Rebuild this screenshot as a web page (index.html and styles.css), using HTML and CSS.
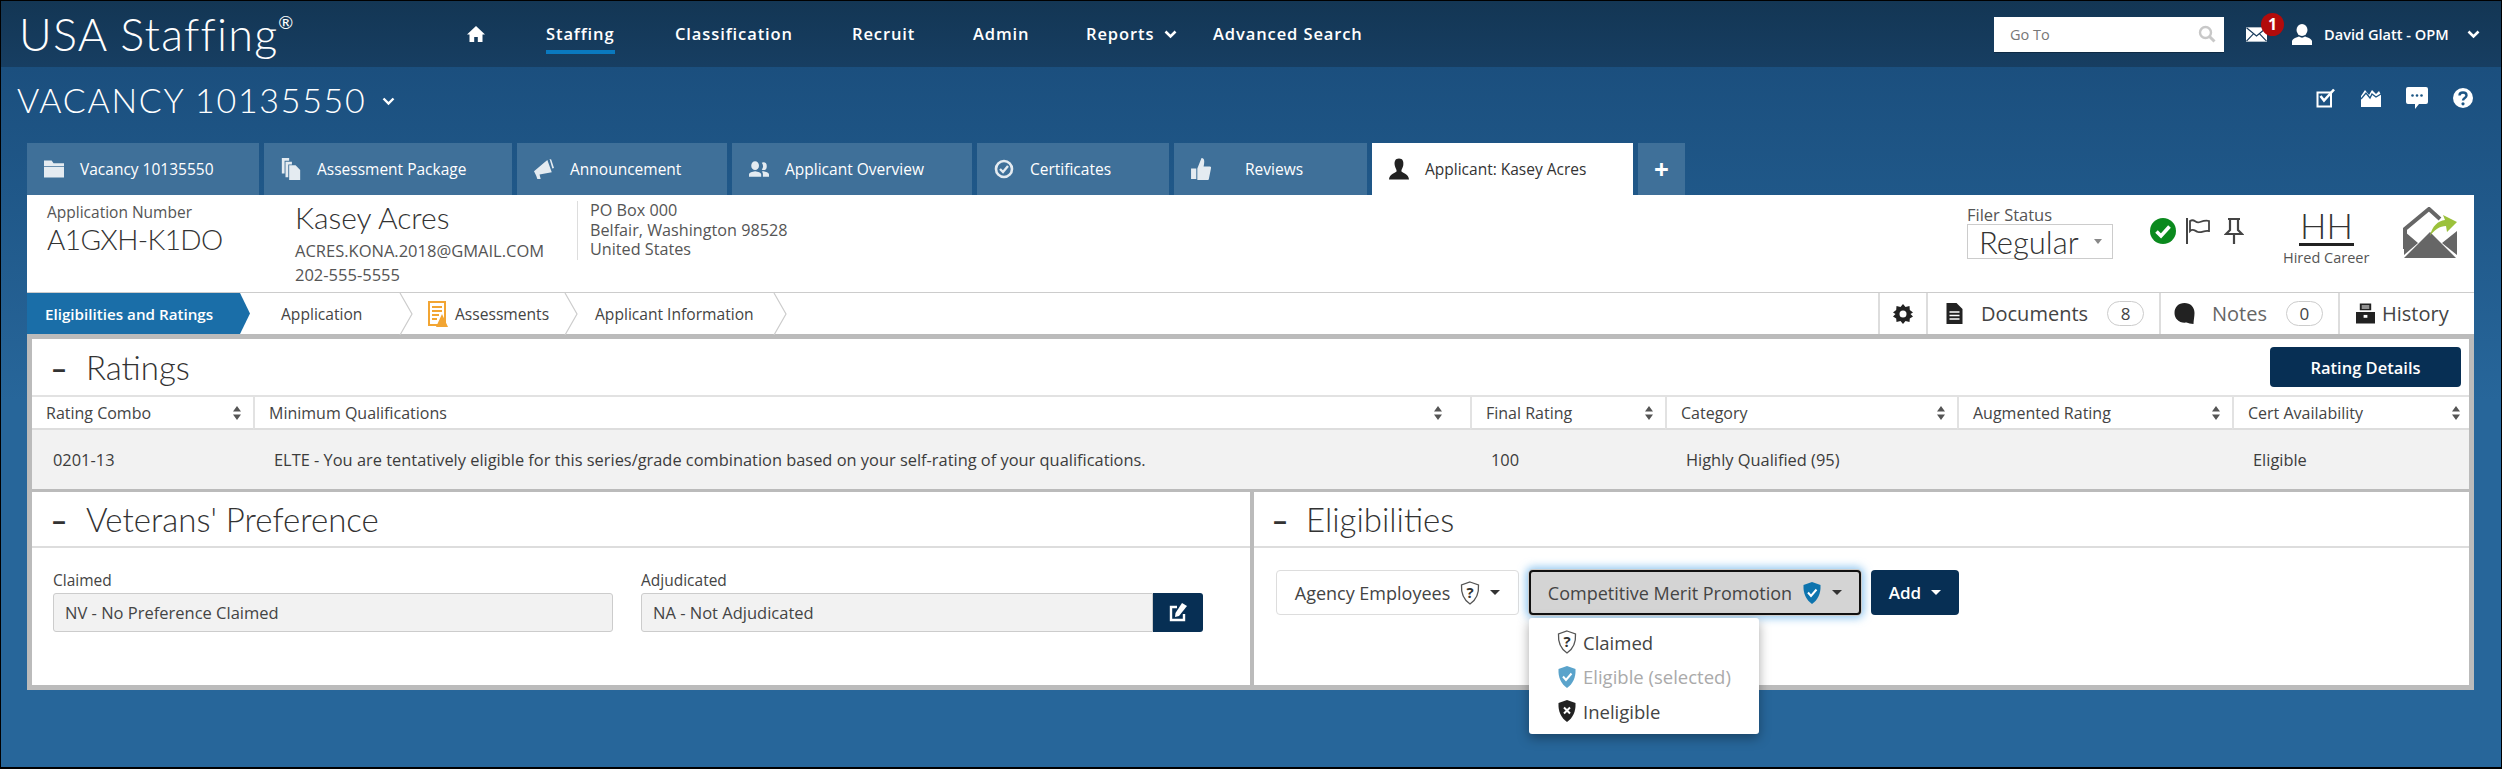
FILE: index.html
```html
<!DOCTYPE html>
<html lang="en">
<head>
<meta charset="utf-8">
<title>USA Staffing - Vacancy 10135550</title>
<link rel="stylesheet" href="styles.css">
</head>
<body>
<div class="page">
  <header class="topbar">
    <div class="logo">USA Staffing<sup>®</sup></div>
    <nav class="mainnav">
      <a class="navitem"><svg class="i18" viewBox="0 0 18 18"><path fill="#fff" d="M9 1 L18 9.5 H15.5 V17 H10.8 V12 H7.2 V17 H2.5 V9.5 H0 Z"/></svg></a>
      <a class="navitem current">Staffing</a>
      <a class="navitem">Classification</a>
      <a class="navitem">Recruit</a>
      <a class="navitem">Admin</a>
      <a class="navitem">Reports<svg class="chev" viewBox="0 0 13 9"><path d="M1.5 1.5 L6.5 6.5 L11.5 1.5" fill="none" stroke="#fff" stroke-width="2.6"/></svg></a>
      <a class="navitem">Advanced Search</a>
    </nav>
    <div class="goto"><span>Go To</span><svg class="i18" viewBox="0 0 18 18"><circle cx="7.5" cy="7.5" r="5.5" fill="none" stroke="#c8c8c8" stroke-width="2.4"/><path d="M11.5 11.5 L16.5 16.5" stroke="#c8c8c8" stroke-width="3"/></svg></div>
    <div class="mail">
      <svg class="mailicon" viewBox="0 0 22 15"><path fill="#fff" d="M0 0 H22 V15 H0 Z"/><path d="M0.5 0.5 L11 9 L21.5 0.5 M0.5 14.5 L8 6.5 M21.5 14.5 L14 6.5" fill="none" stroke="#16395a" stroke-width="1.2"/></svg>
      <span class="badge">1</span>
    </div>
    <div class="user">
      <svg class="usericon" viewBox="0 0 20 21"><ellipse cx="10" cy="6" rx="5.5" ry="6" fill="#fff"/><path fill="#fff" d="M0 21 V17 C1 14 5 13.5 7 12.5 C9 14 11 14 13 12.5 C15 13.5 19 14 20 17 V21 Z"/></svg>
      <span>David Glatt - OPM</span>
      <svg class="chev" viewBox="0 0 13 9"><path d="M1.5 1.5 L6.5 6.5 L11.5 1.5" fill="none" stroke="#fff" stroke-width="2.6"/></svg>
    </div>
  </header>

  <div class="titlebar">
    <h1>VACANCY 10135550</h1>
    <svg class="titlechev" viewBox="0 0 13 9"><path d="M1.5 1.5 L6.5 6.5 L11.5 1.5" fill="none" stroke="#fff" stroke-width="2.4"/></svg>
    <div class="titleicons">
      <svg class="i20" viewBox="0 0 20 20"><path d="M1.5 4.5 H15 V18.5 H1.5 Z" fill="none" stroke="#fff" stroke-width="2"/><path d="M4.5 8 L8 12.5 L18 1.5" fill="none" stroke="#fff" stroke-width="2.6"/></svg>
      <svg class="i20" viewBox="0 0 20 20"><path fill="#fff" d="M0 8 L4 2 L8 7 L11 2 L15 6 L18 3 L20 7 V19 H0 Z"/><path d="M0 11 L5 5 L9 10 L11 6 L15 9 L20 6" fill="none" stroke="#1c5685" stroke-width="1.4"/></svg>
      <svg class="i22" viewBox="0 0 22 22"><path fill="#fff" d="M2 0 H20 Q22 0 22 2 V15 Q22 17 20 17 H13 L9 22 V17 H2 Q0 17 0 15 V2 Q0 0 2 0 Z"/><circle cx="6.5" cy="8.5" r="1.3" fill="#1c5685"/><circle cx="11" cy="8.5" r="1.3" fill="#1c5685"/><circle cx="15.5" cy="8.5" r="1.3" fill="#1c5685"/></svg>
      <svg class="i20" viewBox="0 0 20 20"><circle cx="10" cy="10" r="10" fill="#fff"/><path d="M6.5 7.5 C6.5 3.5 13.5 3.5 13.5 7.5 C13.5 10 10 10 10 12.5" fill="none" stroke="#1c5685" stroke-width="2.4"/><circle cx="10" cy="15.8" r="1.6" fill="#1c5685"/></svg>
    </div>
  </div>

  <nav class="tabs">
    <a class="tab"><svg class="tabicon" viewBox="0 0 21 18"><path fill="#e4ebf1" d="M0 0 H8 L10 3 H21 V6 H0 Z M0 7 H21 V18 H0 Z"/></svg><span>Vacancy 10135550</span></a>
    <a class="tab"><svg class="tabicon" viewBox="0 0 20 24"><path fill="#e4ebf1" d="M0 0 H8 V3 H3 V17 H0 Z M4 4 H11 V7 H7 V21 H4 Z M8 8 H15 L20 13 V24 H8 Z"/></svg><span>Assessment Package</span></a>
    <a class="tab"><svg class="tabicon" viewBox="0 0 18 18"><path fill="#e4ebf1" d="M0 11 L12 1 L16 12 L5 14 L6 18 H3 L2 15 Z M14 0 L15.5 0.5 L18 8 L16.5 8.5 Z"/></svg><span>Announcement</span></a>
    <a class="tab"><svg class="tabicon" viewBox="0 0 18 14"><path fill="#e4ebf1" d="M5.5 0 A3.5 4 0 0 1 5.5 8 A3.5 4 0 0 1 5.5 0 Z M0 14 V12 C0 10 3 9.5 5.5 9 C8 9.5 11 10 11 12 V14 Z M13 1 A3 3.5 0 0 1 13 8 A3 3.5 0 0 1 11.5 7.500 A5 5 0 0 0 11.500 1.400 A3 3 0 0 1 13 1 Z M12.500 14 V11.500 C12.500 10.500 12 9.800 11.500 9.300 L13 9 C15 9.500 18 10 18 12 V14 Z"/></svg><span>Applicant Overview</span></a>
    <a class="tab"><svg class="tabicon" viewBox="0 0 20 20"><circle cx="10" cy="10" r="8" fill="none" stroke="#e4ebf1" stroke-width="2.6"/><path d="M6 10 L9 13 L14 7" fill="none" stroke="#e4ebf1" stroke-width="2.4"/></svg><span>Certificates</span></a>
    <a class="tab wide"><svg class="tabicon" viewBox="0 0 19 21"><path fill="#e4ebf1" d="M0 10 H5 V20 H0 Z M6 10 L10 0 C13 0 13 3 12 8 H18 C19 8 19.500 9 19 10 L17 20 C17 21 16 21 15 21 H6 Z"/></svg><span>Reviews</span></a>
    <a class="tab active"><svg class="tabicon" viewBox="0 0 21 22"><path fill="#222" d="M10.500 0 C14.500 0 15.500 3 15 7 C14.500 10 13 11 13 13 C13 15 21 16 21 22 H0 C0 16 8 15 8 13 C8 11 6.500 10 6 7 C5.500 3 6.500 0 10.500 0 Z"/></svg><span>Applicant: Kasey Acres</span></a>
    <a class="tab plus">+</a>
  </nav>

  <main class="sheet">
    <section class="applicant">
      <div class="appnum">
        <div class="small">Application Number</div>
        <div class="big">A1GXH-K1DO</div>
      </div>
      <div class="who">
        <div class="big name">Kasey Acres</div>
        <div class="small email">ACRES.KONA.2018@GMAIL.COM</div>
        <div class="small phone">202-555-5555</div>
      </div>
      <address class="addr">PO Box 000<br>Belfair, Washington 98528<br>United States</address>
      <div class="filer">
        <div class="small">Filer Status</div>
        <div class="filerselect"><span>Regular</span><i class="caret grey"></i></div>
      </div>
      <div class="flags">
        <svg class="flagicon" viewBox="0 0 26 26"><circle cx="13" cy="13" r="13" fill="#0b8a1e"/><path d="M6.500 13.500 L11 18 L19.500 8.500" fill="none" stroke="#fff" stroke-width="3.600"/></svg>
        <svg class="flagicon flag" viewBox="0 0 24 26"><path d="M1 0 V26" stroke="#444" stroke-width="2"/><path d="M4 3 C9 0 9 6 14 4 C17 3 20 2 23 3 V13 C18 12 16 15 12 14 C9 13 7 10 4 13 Z" fill="none" stroke="#444" stroke-width="1.800"/></svg>
        <svg class="flagicon pin" viewBox="0 0 20 26"><path d="M4 1 H16 M6 1 V12 L2 16 H18 L14 12 V1 M10 16 V26" fill="none" stroke="#444" stroke-width="2.200"/></svg>
      </div>
      <div class="hired">
        <div class="hh">HH</div>
        <div class="hiredlabel">Hired Career</div>
      </div>
      <svg class="envlogo" viewBox="0 0 54 51"><path d="M2 42 V22 L26 2 L37 12" fill="none" stroke="#666" stroke-width="4"/><path fill="#666" d="M1 51 L27 25 L53 51 Z"/><path fill="#666" d="M1 24 L15 36 L1 48 Z M54 24 V48 L39 36 Z"/><path fill="#9bc13b" d="M27 29 C29 19 35 14 42 13 L40 8 L54 15 L44 25 L43 19 C37 19 31 23 27 29 Z"/></svg>
    </section>

    <div class="strip">
      <a class="step first">Eligibilities and Ratings</a>
      <a class="step two"><span>Application</span><svg class="sep" viewBox="0 0 14 42"><path d="M1 0 L13 21 L1 42" fill="none" stroke="#ccc" stroke-width="1.200"/></svg></a>
      <a class="step three"><svg class="assessicon" viewBox="0 0 20 26"><path d="M1 1 H17 V24 H1 Z" fill="#fff" stroke="#f2a533" stroke-width="2"/><path d="M4 6 H14 M4 10 H14 M4 14 H11 M4 18 H9" stroke="#f2a533" stroke-width="1.800"/><path d="M14 13 L20 26 H8 Z" fill="#f2a533"/></svg><span>Assessments</span><svg class="sep" viewBox="0 0 14 42"><path d="M1 0 L13 21 L1 42" fill="none" stroke="#ccc" stroke-width="1.200"/></svg></a>
      <a class="step four"><span>Applicant Information</span><svg class="sep" viewBox="0 0 14 42"><path d="M1 0 L13 21 L1 42" fill="none" stroke="#ccc" stroke-width="1.200"/></svg></a>
      <div class="striptools">
        <div class="tool gear"><svg class="i20" viewBox="0 0 20 20"><path fill="#222" d="M10 0 L12.500 3 L16.500 2 L16.800 6 L20 8.500 L17.500 10 L20 12.500 L16.800 14.500 L16.500 18 L12.500 17 L10 20 L7.500 17 L3.500 18 L3.200 14.500 L0 12.500 L2.500 10 L0 8.500 L3.200 6 L3.500 2 L7.500 3 Z"/><circle cx="10" cy="10" r="3.500" fill="#fff"/></svg></div>
        <div class="tool docs"><svg class="toolicon" viewBox="0 0 16 21"><path fill="#222" d="M0 0 H10 L16 6 V21 H0 Z"/><path d="M3 9 H13 M3 12.500 H13 M3 16 H13" stroke="#fff" stroke-width="1.300"/></svg><span class="tooltext">Documents</span><span class="pill">8</span></div>
        <div class="tool notes"><svg class="toolicon" viewBox="0 0 20 21"><path fill="#222" d="M10 0 C16 0 20 4 20 10 C20 14 19 17 19 21 C16 21 14 20 12 19.500 C5 20.500 0 16 0 10 C0 4 4 0 10 0 Z"/></svg><span class="tooltext light">Notes</span><span class="pill">0</span></div>
        <div class="tool hist"><svg class="toolicon" viewBox="0 0 20 21"><path fill="#222" d="M4 0 H16 V7 H4 Z M0 9 H20 V21 H0 Z"/><path d="M6 2.500 H14 M6 4.800 H14" stroke="#fff" stroke-width="1.100"/><rect x="8" y="12" width="4" height="3" fill="#fff"/></svg><span class="tooltext">History</span></div>
      </div>
    </div>

    <div class="panels">
      <section class="panel ratings">
        <div class="panelhead">
          <h2><span class="dash">–</span>Ratings</h2>
          <button class="btn details">Rating Details</button>
        </div>
        <div class="grid">
          <div class="th"><span>Rating Combo</span><svg class="sort" viewBox="0 0 8 14"><path fill="#555" d="M4 0 L8 5.500 H0 Z M4 14 L0 8.500 H8 Z"/></svg></div>
          <div class="th minq"><span>Minimum Qualifications</span><svg class="sort" viewBox="0 0 8 14"><path fill="#555" d="M4 0 L8 5.500 H0 Z M4 14 L0 8.500 H8 Z"/></svg></div>
          <div class="th"><span>Final Rating</span><svg class="sort" viewBox="0 0 8 14"><path fill="#555" d="M4 0 L8 5.500 H0 Z M4 14 L0 8.500 H8 Z"/></svg></div>
          <div class="th"><span>Category</span><svg class="sort" viewBox="0 0 8 14"><path fill="#555" d="M4 0 L8 5.500 H0 Z M4 14 L0 8.500 H8 Z"/></svg></div>
          <div class="th"><span>Augmented Rating</span><svg class="sort" viewBox="0 0 8 14"><path fill="#555" d="M4 0 L8 5.500 H0 Z M4 14 L0 8.500 H8 Z"/></svg></div>
          <div class="th cert"><span>Cert Availability</span><svg class="sort" viewBox="0 0 8 14"><path fill="#555" d="M4 0 L8 5.500 H0 Z M4 14 L0 8.500 H8 Z"/></svg></div>
          <div class="td">0201-13</div>
          <div class="td">ELTE - You are tentatively eligible for this series/grade combination based on your self-rating of your qualifications.</div>
          <div class="td">100</div>
          <div class="td">Highly Qualified (95)</div>
          <div class="td"></div>
          <div class="td">Eligible</div>
        </div>
      </section>

      <section class="panel">
        <div class="panelhead rule">
          <h2><span class="dash">–</span>Veterans' Preference</h2>
        </div>
        <div class="vetbody">
          <label class="field">
            <span class="fieldlabel">Claimed</span>
            <span class="fieldbox">NV - No Preference Claimed</span>
          </label>
          <label class="field">
            <span class="fieldlabel">Adjudicated</span>
            <span class="fieldrow">
              <span class="fieldbox joined">NA - Not Adjudicated</span>
              <span class="editbtn"><svg class="i20" viewBox="0 0 20 20"><path d="M9 4 H3 V17 H16 V11" fill="none" stroke="#fff" stroke-width="2.400"/><path fill="#fff" d="M14 0 L19 3 L11 13 L7 14 L7.500 10 Z"/></svg></span>
            </span>
          </label>
        </div>
      </section>

      <section class="panel elig">
        <div class="panelhead rule">
          <h2><span class="dash">–</span>Eligibilities</h2>
        </div>
        <div class="eligbody">
          <button class="btn plain">Agency Employees
            <svg class="shield" viewBox="0 0 20 24"><path d="M10 1 L18.500 4 C19 12 16 19 10 23 C4 19 1 12 1.500 4 Z" fill="#fff" stroke="#555" stroke-width="1.300"/><text x="10" y="16.500" class="shieldq">?</text></svg>
            <i class="caret"></i></button>
          <button class="btn focus">Competitive Merit Promotion
            <svg class="shield" viewBox="0 0 20 24"><path d="M10 1 L18.500 4 C19 12 16 19 10 23 C4 19 1 12 1.500 4 Z" fill="#0d74ae"/><path d="M6 11.500 L9 15 L14.500 8.500" fill="none" stroke="#fff" stroke-width="2"/></svg>
            <i class="caret"></i></button>
          <button class="btn add">Add<i class="caret white"></i></button>
          <ul class="menu">
            <li><svg class="shield" viewBox="0 0 20 24"><path d="M10 1 L18.500 4 C19 12 16 19 10 23 C4 19 1 12 1.500 4 Z" fill="#fff" stroke="#555" stroke-width="1.300"/><text x="10" y="16.500" class="shieldq">?</text></svg>Claimed</li>
            <li class="disabled"><svg class="shield" viewBox="0 0 20 24"><path d="M10 1 L18.500 4 C19 12 16 19 10 23 C4 19 1 12 1.500 4 Z" fill="#5aa3cb"/><path d="M6 11.500 L9 15 L14.500 8.500" fill="none" stroke="#fff" stroke-width="2"/></svg>Eligible (selected)</li>
            <li><svg class="shield" viewBox="0 0 20 24"><path d="M10 1 L18.500 4 C19 12 16 19 10 23 C4 19 1 12 1.500 4 Z" fill="#222"/><path d="M7 8.500 L13 14.500 M13 8.500 L7 14.500" stroke="#fff" stroke-width="2"/></svg>Ineligible</li>
          </ul>
        </div>
      </section>
    </div>
  </main>
</div>
</body>
</html>
```

FILE: styles.css
```css
* { box-sizing: border-box; }
html, body { margin: 0; padding: 0; }
body { font-family: "Open Sans", "Noto Sans", "Liberation Sans", sans-serif; color: #3c3c3c; }
svg { display: block; flex: none; }

.page {
  width: 2502px;
  height: 769px;
  border: 1px solid #000;
  border-bottom-width: 2px;
  overflow: hidden;
  background: linear-gradient(#1b4f7e 66px, #27669a 400px);
}

/* top bar */
.topbar {
  height: 66px;
  display: flex;
  align-items: center;
  background: linear-gradient(#133654, #173e62);
  color: #fff;
}
.logo {
  width: 466px;
  padding-left: 18px;
  font-family: "Lato", sans-serif;
  font-weight: 300;
  font-size: 45px;
  letter-spacing: 1.2px;
  line-height: 66px;
  white-space: nowrap;
}
.logo sup { font-size: 18px; font-weight: 400; line-height: 0; vertical-align: 22px; letter-spacing: 0; }
.mainnav {
  width: 1527px;
  display: grid;
  grid-template-columns: 79px 129px 177px 121px 113px 127px auto;
  align-items: center;
}
.navitem {
  display: flex;
  align-items: center;
  gap: 10px;
  font-size: 16.5px;
  font-weight: 600;
  letter-spacing: .9px;
  line-height: 30px;
  white-space: nowrap;
}
.navitem.current { position: relative; justify-self: start; }
.navitem.current::after {
  content: "";
  position: absolute;
  left: 0; right: 0; bottom: -5px;
  height: 4px;
  background: #0a79bf;
}
.i18 { width: 18px; height: 18px; }
.i20 { width: 20px; height: 20px; }
.i22 { width: 22px; height: 22px; }
.chev { width: 13px; height: 9px; }
.goto {
  width: 230px;
  height: 35px;
  background: #fff;
  display: flex;
  align-items: center;
  justify-content: space-between;
  padding: 0 8px 0 16px;
  font-size: 14.5px;
  color: #777;
  box-shadow: 0 1px 0 #0e2a44;
}
.mail { width: 46px; height: 40px; margin-left: 22px; position: relative; display: flex; align-items: center; }
.mailicon { width: 21px; height: 15px; }
.badge {
  position: absolute;
  left: 15px; top: -1px;
  width: 23px; height: 23px;
  border-radius: 50%;
  background: #b20b0b;
  color: #fff;
  font-size: 16px;
  font-weight: 700;
  line-height: 23px;
  text-align: center;
}
.user { display: flex; align-items: center; font-size: 14.6px; font-weight: 600; }
.usericon { width: 20px; height: 21px; margin-right: 12px; }
.user span { width: 143px; white-space: nowrap; }

/* title */
.titlebar {
  height: 76px;
  display: flex;
  align-items: center;
  color: #fff;
  padding: 0 28px 12px 16px;
}
h1 {
  margin: 0;
  font-family: "Lato", sans-serif;
  font-weight: 300;
  font-size: 34px;
  letter-spacing: 1.7px;
  white-space: nowrap;
}
.titlechev { width: 13px; height: 9px; margin: 5px 0 0 16px; }
.titleicons { margin-left: auto; display: flex; align-items: center; gap: 25px; margin-top: -2px; }

/* tabs */
.tabs {
  height: 46px;
  margin-left: 26px;
  display: grid;
  grid-template-columns: 232px 248px 210px 240px 192px 193px 261px 47px;
  column-gap: 5px;
}
.tab {
  display: flex;
  align-items: center;
  gap: 16px;
  padding-left: 17px;
  background: #3f7099;
  color: #fff;
  font-size: 15.5px;
  font-weight: 500;
  white-space: nowrap;
}
.tab.wide { gap: 34px; }
.tab.active { background: #fff; color: #333; height: 52px; }
.tab.plus { font-size: 26px; justify-content: center; padding: 0; font-weight: 700; }
.tabicon { width: 20px; height: 22px; }

/* sheet */
.sheet {
  width: 2447px;
  margin: 6px 0 0 26px;
  background: #fff;
  position: relative;
}
.small { font-size: 16.5px; line-height: 22px; color: #555; white-space: nowrap; }
.big { font-family: "Lato", sans-serif; font-weight: 300; font-size: 30px; line-height: 34px; color: #333; white-space: nowrap; }
.applicant {
  height: 97px;
  display: flex;
  align-items: flex-start;
}
.appnum { width: 268px; padding: 6px 0 0 20px; }
.appnum .small { font-size: 15.5px; }
.appnum .big { margin-top: -1px; font-size: 28px; letter-spacing: -.6px; }
.who { width: 282px; padding-top: 5px; }
.who .email { margin-top: 5px; line-height: 24px; }
.who .phone { line-height: 24px; }
.addr {
  width: 1390px;
  margin-top: 6px;
  height: 59px;
  padding-left: 12px;
  border-left: 1px solid #ddd;
  font-style: normal;
  font-size: 16.2px;
  line-height: 19.5px;
  color: #555;
  white-space: nowrap;
}
.filer { width: 183px; padding-top: 10px; }
.filer .small { line-height: 19px; }
.filerselect {
  width: 146px;
  height: 35px;
  border: 1px solid #ccc;
  display: flex;
  align-items: center;
  justify-content: space-between;
  padding: 0 10px 0 11px;
  font-size: 31px;
  font-family: "Lato", sans-serif;
  font-weight: 300;
  color: #333;
}
.flags { width: 133px; padding-top: 23px; display: flex; gap: 10px; }
.flagicon { width: 26px; height: 26px; }
.flagicon.flag { width: 24px; }
.flagicon.pin { width: 20px; margin-left: 4px; }
.hired { width: 120px; color: #333; padding-top: 12px; }
.hh {
  width: 55px;
  margin-left: 16px;
  font-family: "Lato", sans-serif;
  font-weight: 300;
  font-size: 35px;
  line-height: 36px;
  text-align: center;
  border-bottom: 3px solid #222;
}
.hiredlabel { font-size: 14.5px; line-height: 20px; margin-top: 2px; white-space: nowrap; color: #555; }
.envlogo { width: 54px; height: 51px; margin-top: 12px; }

/* step strip */
.strip {
  height: 42px;
  display: flex;
  align-items: stretch;
  border-top: 1px solid #ccc;
}
.step {
  display: flex;
  align-items: center;
  font-size: 15.6px;
  font-weight: 500;
  color: #444;
  white-space: nowrap;
  justify-content: space-between;
}
.step.first {
  width: 223px;
  padding-left: 18px;
  background: #1a6ea8;
  color: #fff;
  font-size: 15.2px;
  font-weight: 600;
  clip-path: polygon(0 0, 213px 0, 223px 50%, 213px 100%, 0 100%);
}
.step.two { width: 163px; padding-left: 31px; }
.step.three { width: 165px; padding-left: 15px; }
.step.four { width: 209px; padding-left: 17px; }
.sep { width: 14px; height: 42px; }
.assessicon { width: 20px; height: 26px; margin-right: 7px; }
.three span { flex: 1; }
.striptools {
  margin-left: auto;
  display: grid;
  grid-template-columns: 48px 233px 179px 136px;
}
.tool {
  display: flex;
  align-items: center;
  border-left: 2px solid #ddd;
}
.tool.gear { padding-left: 13px; }
.tool.docs { padding-left: 18px; }
.tool.notes { padding-left: 13px; }
.tool.hist { padding-left: 16px; }
.toolicon { width: 17px; height: 21px; margin-right: 18px; }
.notes .toolicon { width: 21px; margin-right: 17px; }
.hist .toolicon { width: 19px; margin-right: 7px; }
.tooltext { font-size: 20px; color: #444; }
.tooltext.light { color: #666; }
.pill {
  width: 37px; height: 25px;
  margin-left: 19px;
  border: 1px solid #ccc;
  border-radius: 13px;
  text-align: center;
  line-height: 23px;
  font-size: 17px;
  color: #444;
}

/* panels */
.panels {
  background: #bbb;
  padding: 5px;
  display: grid;
  grid-template-columns: 1218px 1215px;
  grid-template-rows: 148px 193px;
  column-gap: 4px;
  row-gap: 5px;
}
.panel { background: #fff; }
.ratings { grid-column: 1 / 3; }
.panelhead {
  height: 56px;
  display: flex;
  align-items: center;
  justify-content: space-between;
  padding: 0 8px 0 20px;
}
.panelhead.rule { border-bottom: 2px solid #ddd; }
h2 {
  margin: 0;
  font-family: "Lato", sans-serif;
  font-weight: 300;
  font-size: 33px;
  color: #333;
  white-space: nowrap;
  display: flex;
  align-items: center;
}
.dash { width: 34px; font-weight: 600; font-size: 28px; font-family: "Open Sans", sans-serif; }
.elig .dash { width: 33px; }
.elig .panelhead { padding-left: 19px; }
.btn {
  font-family: inherit;
  border-radius: 4px;
  border: 0;
  display: flex;
  align-items: center;
  justify-content: center;
  white-space: nowrap;
}
.details {
  width: 191px; height: 40px;
  background: #072f54;
  color: #fff;
  font-size: 16.5px;
  font-weight: 600;
}
.grid {
  display: grid;
  grid-template-columns: 221px 1217px 195px 292px 275px 237px;
  grid-template-rows: 33px 59px;
  border-top: 2px solid #e2e2e2;
}
.th {
  display: flex;
  align-items: center;
  justify-content: space-between;
  padding: 0 12px 0 14px;
  font-size: 16px;
  color: #444;
  border-bottom: 2px solid #ddd;
  border-left: 2px solid #e2e2e2;
}
.th:first-child { border-left: 0; }
.th.minq { padding-right: 28px; }
.th.cert { padding-right: 9px; }
.sort { width: 8px; height: 14px; }
.td {
  display: flex;
  align-items: center;
  padding-left: 21px;
  font-size: 16.4px;
  background: #f2f2f2;
  white-space: nowrap;
}

/* veterans */
.vetbody {
  display: grid;
  grid-template-columns: 560px 562px;
  column-gap: 28px;
  padding: 22px 0 0 21px;
}
.field { display: block; }
.fieldlabel { display: block; font-size: 15.5px; line-height: 20px; color: #444; }
.fieldbox {
  display: flex;
  align-items: center;
  height: 39px;
  margin-top: 3px;
  padding-left: 11px;
  background: #f2f2f2;
  border: 1px solid #ccc;
  border-radius: 3px;
  font-size: 16.5px;
  color: #444;
}
.fieldrow { display: flex; margin-top: 3px; }
.fieldbox.joined { margin-top: 0; flex: 1; border-radius: 3px 0 0 3px; }
.editbtn {
  width: 50px;
  height: 39px;
  background: #072f54;
  border-radius: 0 3px 3px 0;
  display: flex;
  align-items: center;
  justify-content: center;
}

/* eligibilities */
.eligbody {
  position: relative;
  display: flex;
  gap: 10px;
  padding: 22px 0 0 22px;
}
.plain, .focus { height: 45px; font-size: 18px; color: #444; gap: 10px; }
.plain { width: 243px; background: #fff; border: 1px solid #ddd; }
.focus {
  width: 332px;
  background: #d4d4d4;
  border: 2px solid #111;
  box-shadow: 0 0 0 1px #ccc, 0 0 8px 3px rgba(70, 160, 230, .6);
}
.add { width: 88px; height: 45px; background: #072f54; color: #fff; font-size: 17px; font-weight: 600; gap: 10px; }
.shield { width: 20px; height: 24px; }
.shieldq { font: 700 15px "Open Sans", sans-serif; fill: #333; text-anchor: middle; }
.caret {
  display: block;
  width: 0; height: 0;
  border-left: 5px solid transparent;
  border-right: 5px solid transparent;
  border-top: 5px solid #333;
}
.caret.white { border-top-color: #fff; }
.caret.grey { border-top-color: #888; border-left-width: 4px; border-right-width: 4px; }
.menu {
  position: absolute;
  left: 275px;
  top: 70px;
  z-index: 3;
  width: 230px;
  height: 116px;
  margin: 0;
  padding: 7px 0 0 28px;
  list-style: none;
  background: #fff;
  border-radius: 3px;
  box-shadow: 0 4px 12px rgba(0, 0, 0, .35);
}
.menu li {
  display: flex;
  align-items: center;
  gap: 6px;
  height: 34.5px;
  font-size: 18.5px;
  color: #444;
}
.menu li.disabled { color: #aaa; }
```
